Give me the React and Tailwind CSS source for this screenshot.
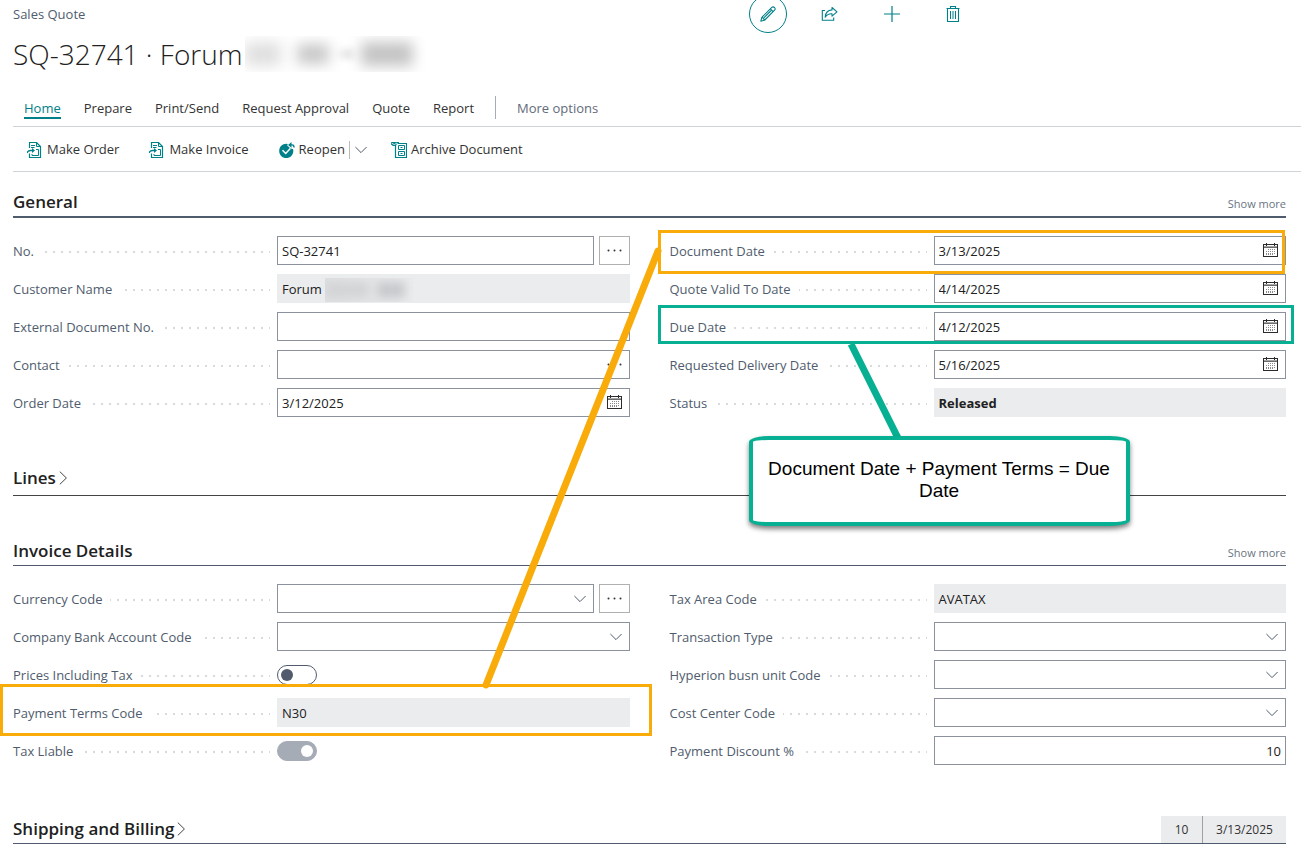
import React, { useState } from 'react';

const TEAL = '#008089';

const tabs = ['Prepare', 'Print/Send', 'Request Approval', 'Quote', 'Report'];

function PencilIcon() {
  return (
    <svg width="16" height="16" viewBox="0 0 16 16" fill="none" stroke={TEAL} strokeWidth="1.1" strokeLinejoin="round">
      <path d="M0.8 15.2 L2 11.2 L11.8 1.4 C12.5 0.7 13.6 0.7 14.5 1.5 C15.3 2.4 15.3 3.5 14.6 4.2 L4.8 14 Z" />
      <path d="M2 11.2 L4.8 14 M10.4 2.8 L13.2 5.6 M3.8 11.9 L11.2 4.5" />
    </svg>
  );
}

function ShareIcon() {
  return (
    <svg width="17" height="16" viewBox="0 0 17 16" fill="none" stroke={TEAL} strokeWidth="1.1" strokeLinejoin="round">
      <path d="M4 4.5 H1.3 V14.2 H12.7 V11.5" />
      <path d="M11 1.5 L16 5.8 L11 10.2 V7.8 C8 7.6 6 8.6 4.2 11.2 C4.4 7 7 4.2 11 3.9 Z" />
    </svg>
  );
}

function PlusIcon() {
  return (
    <svg width="16" height="16" viewBox="0 0 16 16" fill="none" stroke={TEAL} strokeWidth="1.2">
      <path d="M8 0 V16 M0 8 H16" />
    </svg>
  );
}

function TrashIcon() {
  return (
    <svg width="14" height="16" viewBox="0 0 14 16" fill="none" stroke={TEAL}>
      <path d="M0.5 2.5 H13.5 M4.5 2.5 V0.5 H9.5 V2.5 M1.5 2.5 V15.5 H12.5 V2.5" strokeWidth="1.1" />
      <path d="M4.5 5 V13 M7 5 V13 M9.5 5 V13" />
    </svg>
  );
}

function DocArrowIcon() {
  return (
    <svg width="16" height="16" viewBox="0 0 16 16" fill="none" stroke={TEAL}>
      <path d="M2.5 6 V0.5 H9.5 L13.5 4.5 V15.5 H2.5 V11.5" strokeWidth="1.2" />
      <path d="M9.5 0.5 V4.5 H13.5 M4 3.5 H8 M4 5.5 H7.5" />
      <path d="M0 11 C0.5 9.3 1.5 8.5 3.5 8.5 H6" strokeWidth="1.3" />
      <path d="M5 6 L8 8.5 L5 11 Z" fill={TEAL} stroke="none" />
      <path d="M9 7.5 H11.5 V13.5 H5 V12" />
    </svg>
  );
}

function ReopenIcon() {
  return (
    <svg width="16" height="16" viewBox="0 0 16 16" fill="none">
      <path d="M7.3 1.8 C3.3 1.8 0.2 4.9 0.2 8.9 C0.2 12.8 3.3 16 7.3 16 C11.2 16 14.3 12.8 14.3 8.9 C14.3 8.2 14.2 7.5 14 6.9 L11.5 6.5 L8.2 3.6 L8.8 1.9 Z" fill={TEAL} />
      <path d="M3.5 8.2 L6.7 11.5 L11.3 6.5" stroke="#fff" strokeWidth="1.5" />
      <path d="M12.5 0 L9 2.9 L12.5 5.8 Z" fill={TEAL} />
      <path d="M11.5 2.9 H13.2 C14.3 2.9 15 3.6 15 5.4" stroke={TEAL} strokeWidth="1.4" />
    </svg>
  );
}

function ArchiveIcon() {
  return (
    <svg width="16" height="16" viewBox="0 0 16 16" fill="none" stroke={TEAL}>
      <path d="M0 0 H8 V1.5 H6 L5 4 H2 L0 2.5 Z" fill={TEAL} stroke="none" />
      <path d="M0.5 1 L3.2 2.6 L6 1" stroke="#fff" strokeWidth="0.8" />
      <path d="M7 1.5 H15.5 V15.5 H4.5 V4" strokeWidth="1.2" />
      <path d="M7.5 3.5 H13.5 V7.5 H7.5 Z M7.5 9.5 H13.5 V13.5 H7.5 Z M9.5 5.5 H11.5 M9.5 11.5 H11.5" />
    </svg>
  );
}

function CalendarIcon() {
  return (
    <svg width="15" height="15" viewBox="0 0 15 15" fill="none" stroke="#2b2b2b" shapeRendering="crispEdges">
      <path d="M0 3.5 H15" stroke="#a3a3a3" />
      <path d="M0 4.5 H15" stroke="#6b6b6b" />
      <path d="M0.5 1.5 H14.5 V13.5 H0.5 Z" />
      <path d="M3.5 0 V3 M11.5 0 V3" />
      <path d="M5 6.5 H13 M3 8.5 H13 M3 10.5 H13 M3 11.5 H10" stroke="#8a8a8a" strokeDasharray="1 1" />
    </svg>
  );
}

function ChevronDown() {
  return (
    <svg width="12" height="8" viewBox="0 0 12 8" fill="none" stroke="#505c6d">
      <path d="M0.4 1 L6 6.6 L11.6 1" />
    </svg>
  );
}

function ChevronRight() {
  return (
    <svg width="9" height="14" viewBox="0 0 9 14" fill="none" stroke="#444">
      <path d="M0.8 0.6 L7.4 7 L0.8 13.4" />
    </svg>
  );
}

// outline drawn over a row to mark the fields being explained
function Highlight({ className }) {
  return <span className={`absolute border-3 pointer-events-none z-10 ${className}`}></span>;
}

function Row({ id, label, highlight, children }) {
  return (
    <div className="relative flex h-[29px]">
      <div className="w-[257px] mr-[7px] shrink-0 bg-[linear-gradient(90deg,#d9dadc_2px,transparent_2px)] bg-[length:8px_2px] bg-repeat-x bg-[position:0_15px]">
        <label htmlFor={id} className="inline-block bg-white pt-px pr-2 text-[#505c6d] leading-[29px] whitespace-nowrap">
          {label}
        </label>
      </div>
      <div className="flex flex-1 min-w-0 gap-[5px] items-center">{children}</div>
      {highlight && <Highlight className={highlight} />}
    </div>
  );
}

function TextBox({ id, value = '', right }) {
  return (
    <input
      id={id}
      type="text"
      defaultValue={value}
      className={`flex-1 min-w-0 h-full border border-[#8b929d] px-1 pt-px bg-white text-[#212121] outline-none ${right ? 'text-right' : ''}`}
    />
  );
}

function ReadOnly({ id, value, bold, children }) {
  return (
    <div className="flex flex-1 min-w-0 h-full bg-[#ebecee] pl-[5px]">
      <output id={id} className={`pt-px leading-[29px] text-[#212121] ${bold ? 'font-bold' : ''}`}>{value}</output>
      {children}
    </div>
  );
}

function DateBox({ id, value }) {
  return (
    <div className="flex flex-1 min-w-0 h-full items-center border border-[#8b929d] bg-white pr-[7px]">
      <input id={id} type="text" defaultValue={value} className="flex-1 min-w-0 h-full pt-px pl-1 text-[#212121] outline-none" />
      <button aria-label="Open calendar"><CalendarIcon /></button>
    </div>
  );
}

function SelectBox({ id }) {
  return (
    <div className="grid flex-1 min-w-0 h-full items-center">
      <select id={id} className="col-start-1 row-start-1 w-full h-full appearance-none border border-[#8b929d] bg-white px-1 outline-none">
        <option></option>
      </select>
      <span className="col-start-1 row-start-1 justify-self-end pr-2 pointer-events-none"><ChevronDown /></span>
    </div>
  );
}

function Dots() {
  return (
    <svg width="15" height="3" viewBox="0 0 15 3" fill="#333">
      <circle cx="1.5" cy="1.5" r="1" />
      <circle cx="7.5" cy="1.5" r="1" />
      <circle cx="13.5" cy="1.5" r="1" />
    </svg>
  );
}

function MoreButton() {
  return (
    <button aria-label="Look up" className="flex w-[31px] h-full shrink-0 items-center justify-center border border-[#b0b0b0] bg-white">
      <Dots />
    </button>
  );
}

function Toggle({ id, initial, disabled }) {
  const [on, setOn] = useState(initial);

  return (
    <input
      id={id}
      type="checkbox"
      role="switch"
      checked={on}
      disabled={disabled}
      onChange={() => setOn(!on)}
      className="flex appearance-none items-center w-10 h-5 rounded-full border border-[#505c6d] bg-white px-[3px] before:block before:size-3 before:rounded-full before:bg-[#505c6d] checked:justify-end checked:border-[#a6acb5] checked:bg-[#a6acb5] checked:before:bg-white"
    />
  );
}

function SectionHeader({ title, collapsed, showMore, className }) {
  return (
    <div className={`flex items-end justify-between ${className}`}>
      <h2 className="text-[17px] leading-6 font-semibold text-[#212121]">
        <button className="flex items-center gap-[3px]">
          {title}
          {collapsed && <ChevronRight />}
        </button>
      </h2>
      {showMore && <button className="text-[11px] leading-5 text-[#6a7482]">Show more</button>}
    </div>
  );
}

function ActionButton({ icon, label }) {
  return (
    <button className="flex items-center gap-1">
      {icon}
      {label}
    </button>
  );
}

function App() {
  return (
    <div className="relative overflow-hidden bg-white pb-2 font-['Open_Sans',sans-serif] text-[14px] text-[#333]">
      <header>
        <div className="grid grid-cols-2 h-7 items-center pl-[13px]">
          <span className="pt-px text-[13px] text-[#505c6d]">Sales Quote</span>
          <div className="flex items-center h-7 pl-[92px]">
            <button aria-label="Edit" className="flex size-[38px] items-center justify-center rounded-full border border-[#008089]">
              <PencilIcon />
            </button>
            <button aria-label="Share" className="ml-[34px]"><ShareIcon /></button>
            <button aria-label="New" className="ml-[46px]"><PlusIcon /></button>
            <button aria-label="Delete" className="ml-[46px]"><TrashIcon /></button>
          </div>
        </div>
        <div className="flex h-[52px] items-center pl-[13px]">
          <h1 className="text-[28px] font-light text-[#212121] whitespace-nowrap">SQ-32741 · Forum</h1>
          {/* redacted part of the customer name */}
          <div aria-hidden="true" className="flex items-center w-[180px] h-9 overflow-hidden ml-[3px]">
            <span className="w-9 h-6 shrink-0 bg-[#e0e0e0] blur-[7px]"></span>
            <span className="w-8 h-5 shrink-0 ml-4 bg-[#c8c8c8] blur-[7px]"></span>
            <span className="w-3 h-1 shrink-0 ml-3 bg-[#bbb] blur-[4px]"></span>
            <span className="w-13 h-6 shrink-0 ml-2 bg-[#c4c4c4] blur-[7px]"></span>
          </div>
        </div>
      </header>

      <div className="pl-[13px]">
        <nav className="flex items-end h-[47px] gap-[23px] border-b border-[#d0d3d8] pl-[11px] pb-[7px] leading-[17px] text-[13px]">
          <a href="#home" className="border-b-2 border-[#008089] text-[#008089]">Home</a>
          {tabs.map((tab) => (
            <a key={tab} href={`#${tab}`} className="border-b-2 border-transparent">{tab}</a>
          ))}
          <span className="h-[23px] -mx-0.5 border-l border-[#a6acb5]"></span>
          <a href="#more" className="border-b-2 border-transparent text-[#5f6b7a]">More options</a>
        </nav>
        <div className="flex items-center h-[45px] gap-[30px] border-b border-[#d0d3d8] pl-[14px] pt-0.5 text-[13px]">
          <ActionButton icon={<DocArrowIcon />} label="Make Order" />
          <ActionButton icon={<DocArrowIcon />} label="Make Invoice" />
          <div className="flex items-center">
            <ActionButton icon={<ReopenIcon />} label="Reopen" />
            <span className="h-[18px] ml-1 mr-[5px] border-l border-[#bbb]"></span>
            <button aria-label="More reopen actions"><ChevronDown /></button>
            <span className="-mr-1.5"></span>
          </div>
          <ActionButton icon={<ArchiveIcon />} label="Archive Document" />
        </div>
      </div>

      <main className="pl-[13px] pr-[15px] text-[13px]">
        <section>
          <SectionHeader title="General" showMore className="h-[46px] border-b-2 border-[#505c6d] pb-[2px]" />
          <div className="relative grid grid-cols-2 gap-x-10 mt-[18px]">
            <div className="grid gap-[9px]">
              <Row id="no" label="No.">
                <TextBox id="no" value="SQ-32741" />
                <MoreButton />
              </Row>
              <Row id="customer" label="Customer Name">
                <ReadOnly id="customer" value="Forum">
                  <span aria-hidden="true" className="flex items-center w-[90px] h-6 mt-1 ml-[3px] overflow-hidden bg-linear-to-r from-[#dfe0e2] to-[#ebecee]">
                    <span className="w-11 h-4 shrink-0 bg-[#d3d4d6] blur-[5px]"></span>
                    <span className="w-7 h-4 shrink-0 ml-2 bg-[#c8c9cc] blur-[5px]"></span>
                  </span>
                </ReadOnly>
              </Row>
              <Row id="external" label="External Document No.">
                <TextBox id="external" />
              </Row>
              <Row id="contact" label="Contact">
                <div className="flex flex-1 h-full items-center border border-[#8b929d] pr-[7px]">
                  <input id="contact" type="text" className="flex-1 min-w-0 pl-1 outline-none" />
                  <button aria-label="Look up contact"><Dots /></button>
                </div>
              </Row>
              <Row id="orderDate" label="Order Date">
                <DateBox id="orderDate" value="3/12/2025" />
              </Row>
            </div>

            <div className="relative grid gap-[9px]">
              <Row id="docDate" label="Document Date" highlight="border-[#f9ab0a] -left-3 right-px -top-1.5 -bottom-[9px]">
                <DateBox id="docDate" value="3/13/2025" />
              </Row>
              <Row id="validTo" label="Quote Valid To Date">
                <DateBox id="validTo" value="4/14/2025" />
              </Row>
              <Row id="dueDate" label="Due Date" highlight="border-[#07b092] -left-3 -right-2 -top-[7px] -bottom-[3px]">
                <DateBox id="dueDate" value="4/12/2025" />
              </Row>
              <Row id="delivery" label="Requested Delivery Date">
                <DateBox id="delivery" value="5/16/2025" />
              </Row>
              <Row id="status" label="Status">
                <ReadOnly id="status" value="Released" bold />
              </Row>

              {/* callout for the due date */}
              <svg className="absolute left-44 top-[106px] z-10 pointer-events-none" width="62" height="100" viewBox="0 0 62 100">
                <path d="M5 2 L54 100" stroke="#07b092" strokeWidth="7" />
              </svg>
              <div className="absolute left-[79px] top-[200px] z-20 w-[381px] h-[90px] rounded-[20px/6px] border-4 border-[#07b092] bg-white px-3 pt-[18px] text-center font-['Liberation_Sans',Arial,sans-serif] text-[19px] leading-[22px] text-black shadow-[0_3px_5px_rgba(0,0,0,0.5)]">
                Document Date + Payment Terms = Due Date
              </div>
            </div>

            {/* ties the payment terms to the document date */}
            <svg className="absolute right-1/2 -mr-[13px] top-2 z-10 pointer-events-none" width="190" height="450" viewBox="0 0 190 450">
              <path d="M185 7 L13 441" stroke="#f9ab0a" strokeWidth="7" strokeLinecap="round" />
            </svg>
          </div>
        </section>

        <section className="mt-[33px]">
          <SectionHeader title="Lines" collapsed className="h-[46px] border-b border-[#444] pb-[5px]" />
        </section>

        <section className="mt-6">
          <SectionHeader title="Invoice Details" showMore className="h-[46px] border-b border-[#505c6d] pb-[2px]" />
          <div className="grid grid-cols-2 gap-x-10 mt-[18px]">
            <div className="grid gap-[9px]">
              <Row id="currency" label="Currency Code">
                <SelectBox id="currency" />
                <MoreButton />
              </Row>
              <Row id="bank" label="Company Bank Account Code">
                <SelectBox id="bank" />
              </Row>
              <Row id="inclTax" label="Prices Including Tax">
                <Toggle id="inclTax" initial={false} />
              </Row>
              <Row id="terms" label="Payment Terms Code" highlight="border-[#f9ab0a] -left-[13px] -right-[22px] -top-[14px] -bottom-[9px]">
                <ReadOnly id="terms" value="N30" />
              </Row>
              <Row id="liable" label="Tax Liable">
                <Toggle id="liable" initial={true} disabled />
              </Row>
            </div>

            <div className="grid gap-[9px]">
              <Row id="taxArea" label="Tax Area Code">
                <ReadOnly id="taxArea" value="AVATAX" />
              </Row>
              <Row id="transaction" label="Transaction Type">
                <SelectBox id="transaction" />
              </Row>
              <Row id="hyperion" label="Hyperion busn unit Code">
                <SelectBox id="hyperion" />
              </Row>
              <Row id="costCenter" label="Cost Center Code">
                <SelectBox id="costCenter" />
              </Row>
              <Row id="discount" label="Payment Discount %">
                <TextBox id="discount" value="10" right />
              </Row>
            </div>
          </div>
        </section>

        <section className="flex items-end justify-between h-7 mt-[51px] border-b border-[#505c6d]">
          <SectionHeader title="Shipping and Billing" collapsed className="pb-[2px]" />
          <div className="flex h-[27px] text-[12px] leading-[27px] text-[#333]">
            <span className="w-[41px] bg-[#ebecee] text-center">10</span>
            <span className="w-[84px] border-l border-[#a0a0a0] bg-[#ebecee] text-center">3/13/2025</span>
          </div>
        </section>
      </main>
    </div>
  );
}

export default App;
